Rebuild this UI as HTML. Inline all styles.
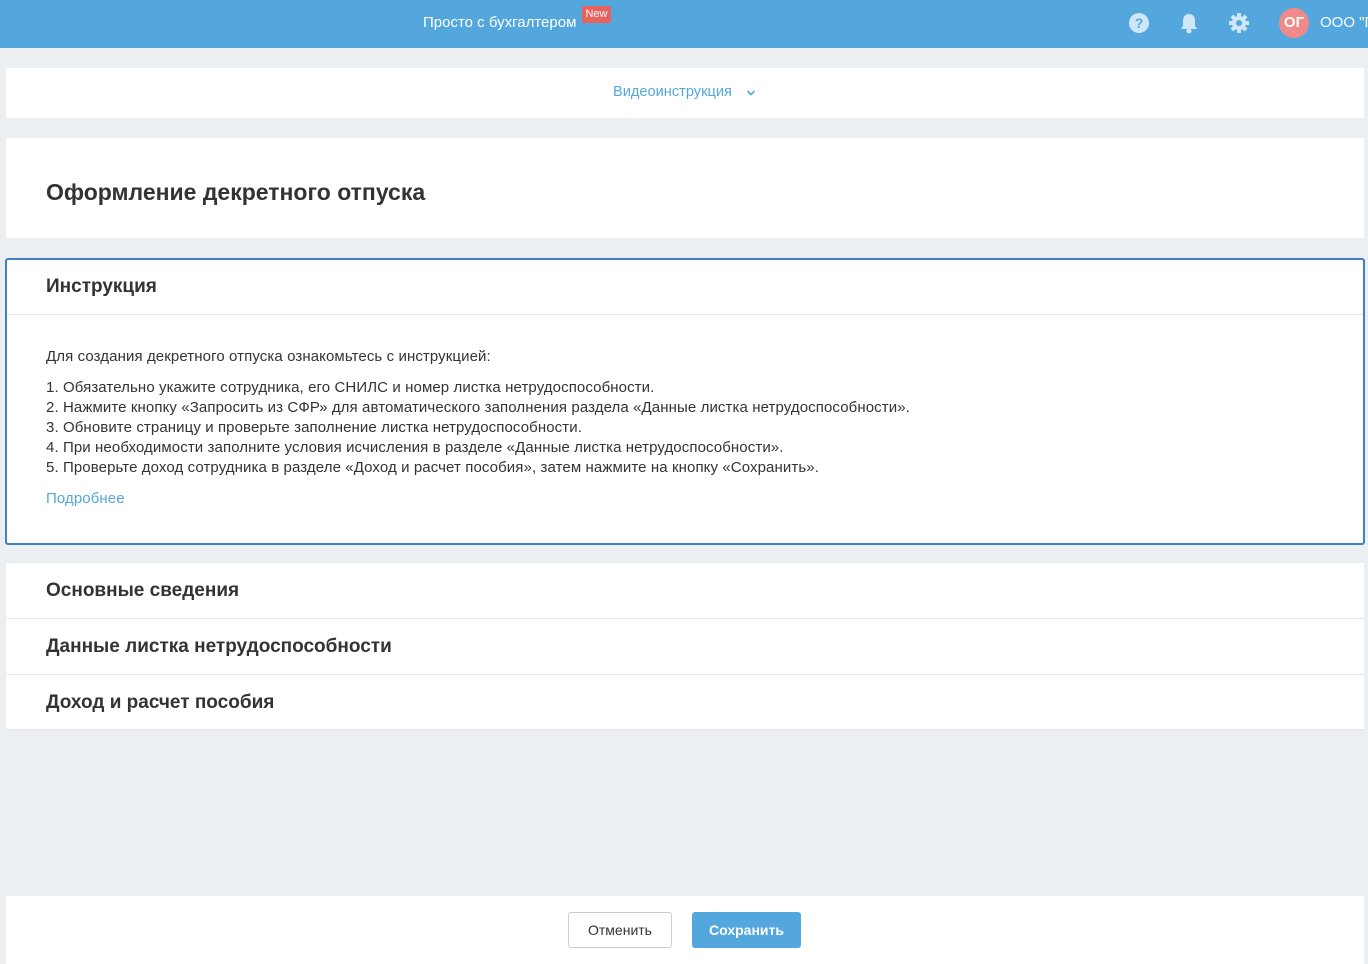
<!DOCTYPE html>
<html><head><meta charset="utf-8"><style>
*{box-sizing:border-box;margin:0;padding:0}
body{width:1368px;height:964px;background:#ebeff2;font-family:"Liberation Sans","Noto Sans CJK SC",sans-serif;color:#333;position:relative;overflow:hidden}
.top{position:absolute;left:0;top:0;width:1368px;height:48px;background:#54a7dc;color:#fff}
.abs{position:absolute}
.card{position:absolute;left:6px;width:1358px;background:#fff}
.sec{position:absolute;left:6px;width:1358px;height:56px;background:#fff;border-bottom:1px solid #e6e6e6;font-size:19px;font-weight:bold;padding-left:40px;line-height:56px;color:#333}
.ins p{font-size:15px;line-height:20px;color:#333;letter-spacing:0.1px}
</style></head><body>
<div class="top">
 <div class="abs" style="left:423px;top:14px;font-size:15px">Просто с бухгалтером</div>
 <div class="abs" style="left:582px;top:6px;width:29px;height:17px;background:#e8625d;border-radius:2px;font-size:11px;text-align:center;line-height:16px">New</div>
 <svg class="abs" style="left:1128px;top:12px" width="22" height="22"><circle cx="11" cy="11" r="10" fill="#cfe6f6"/><text x="11" y="16" font-size="14" font-weight="bold" fill="#54a7dc" text-anchor="middle" font-family="Liberation Sans">?</text></svg>
 <svg class="abs" style="left:1180px;top:12px" width="18" height="22"><path d="M9 2c-4 0-6 3-6 7v5l-2 3h16l-2-3V9c0-4-2-7-6-7z" fill="#cfe6f6"/><circle cx="9" cy="19" r="2.5" fill="#cfe6f6"/></svg>
 <svg class="abs" style="left:1228px;top:12px" width="22" height="22"><g fill="#cfe6f6"><circle cx="11" cy="11" r="7"/><rect x="9" y="1" width="4" height="20"/><rect x="1" y="9" width="20" height="4"/><rect x="9" y="1" width="4" height="20" transform="rotate(45 11 11)"/><rect x="9" y="1" width="4" height="20" transform="rotate(-45 11 11)"/></g><circle cx="11" cy="11" r="3" fill="#54a7dc"/></svg>
 <div class="abs" style="left:1279px;top:8px;width:30px;height:30px;border-radius:50%;background:#ef8a88;font-size:15px;font-weight:bold;text-align:center;line-height:30px">ОГ</div>
 <div class="abs" style="left:1320px;top:14px;font-size:15px;white-space:nowrap">ООО "Г.</div>
</div>
<div class="card" style="top:68px;height:50px">
 <div class="abs" style="left:607px;top:16px;color:#54a7dc;font-size:14.6px">Видеоинструкция</div>
 <svg class="abs" style="left:740px;top:21px" width="10" height="8"><path d="M1.5 2l3.5 3.5L8.5 2" stroke="#54a7dc" stroke-width="1.6" fill="none"/></svg>
</div>
<div class="card" style="top:138px;height:100px"><div class="abs" style="left:40px;top:41px;font-size:23px;font-weight:bold;color:#333">Оформление декретного отпуска</div></div>
<div class="card ins" style="top:258px;height:287px;border:2px solid #3e82c6;border-radius:3px;left:5px;width:1360px">
 <div style="height:55px;border-bottom:1px solid #e6e6e6;padding-left:39px;line-height:54px;font-size:19px;font-weight:bold">Инструкция</div>
 <div style="padding:32px 39px 0">
 <p>Для создания декретного отпуска ознакомьтесь с инструкцией:</p>
 <p style="margin-top:11px">1. Обязательно укажите сотрудника, его СНИЛС и номер листка нетрудоспособности.</p>
 <p>2. Нажмите кнопку «Запросить из СФР» для автоматического заполнения раздела «Данные листка нетрудоспособности».</p>
 <p>3. Обновите страницу и проверьте заполнение листка нетрудоспособности.</p>
 <p>4. При необходимости заполните условия исчисления в разделе «Данные листка нетрудоспособности».</p>
 <p>5. Проверьте доход сотрудника в разделе «Доход и расчет пособия», затем нажмите на кнопку «Сохранить».</p>
 <p style="margin-top:11px;color:#54a7dc">Подробнее</p>
 </div>
</div>
<div class="sec" style="top:563px">Основные сведения</div>
<div class="sec" style="top:619px">Данные листка нетрудоспособности</div>
<div class="sec" style="top:675px;height:55px">Доход и расчет пособия</div>
<div class="card" style="top:896px;height:68px">
 <div class="abs" style="left:562px;top:16px;width:104px;height:36px;border:1px solid #ccc;border-radius:3px;text-align:center;line-height:34px;font-size:14px">Отменить</div>
 <div class="abs" style="left:686px;top:16px;width:109px;height:36px;background:#54a7dc;border-radius:3px;text-align:center;line-height:36px;font-size:14px;color:#fff;font-weight:bold">Сохранить</div>
</div>
</body></html>
